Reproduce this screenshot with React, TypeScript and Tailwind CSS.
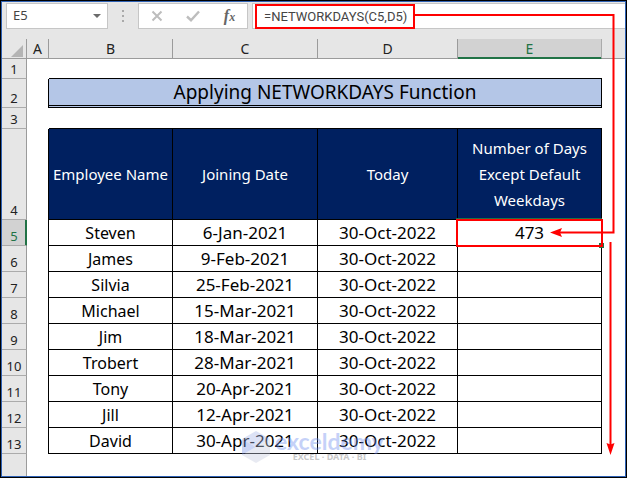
import React from "react";

const rows = [
  { name: "Steven", joined: "6-Jan-2021", today: "30-Oct-2022", days: "473" },
  { name: "James", joined: "9-Feb-2021", today: "30-Oct-2022", days: "" },
  { name: "Silvia", joined: "25-Feb-2021", today: "30-Oct-2022", days: "" },
  { name: "Michael", joined: "15-Mar-2021", today: "30-Oct-2022", days: "" },
  { name: "Jim", joined: "18-Mar-2021", today: "30-Oct-2022", days: "" },
  { name: "Trobert", joined: "28-Mar-2021", today: "30-Oct-2022", days: "" },
  { name: "Tony", joined: "20-Apr-2021", today: "30-Oct-2022", days: "" },
  { name: "Jill", joined: "12-Apr-2021", today: "30-Oct-2022", days: "" },
  { name: "David", joined: "30-Apr-2021", today: "30-Oct-2022", days: "" },
];

const FormulaBar = () => (
  <div className="flex h-[37px] gap-1 bg-[#e6e6e6] pt-px pl-1">
    <div className="flex h-[26px] w-[102px] items-center border border-[#c6c6c6] bg-white">
      <input
        aria-label="Name box"
        defaultValue="E5"
        className="min-w-0 flex-1 bg-transparent pl-1.5 text-[13px] text-[#444] outline-none"
      />
      <button aria-label="Show names" className="flex h-full w-5 items-center justify-center">
        <svg width="8" height="4" viewBox="0 0 8 4" fill="#6b6b6b">
          <path d="M0 0h8L4 4z" />
        </svg>
      </button>
    </div>
    <div className="flex h-[26px] w-[22px] flex-col items-center justify-center gap-[3px]">
      <span className="size-0.5 bg-[#a9a9a9]" />
      <span className="size-0.5 bg-[#a9a9a9]" />
      <span className="size-0.5 bg-[#a9a9a9]" />
    </div>
    <div className="flex h-[26px] w-[110px] items-center justify-around border border-[#c6c6c6] bg-white">
      <button aria-label="Cancel">
        <svg width="12" height="12" viewBox="0 0 12 12" fill="none" stroke="#bdbdbd" strokeWidth="2">
          <path d="M1.500 1.500l9 9M10.500 1.500l-9 9" />
        </svg>
      </button>
      <button aria-label="Enter">
        <svg width="14" height="12" viewBox="0 0 14 12" fill="none" stroke="#bdbdbd" strokeWidth="2.4">
          <path d="M1 6.500l4 3.700L13 1.500" />
        </svg>
      </button>
      <button
        aria-label="Insert function"
        className="font-['Liberation_Serif',serif] text-base leading-4 font-bold text-[#666] italic"
      >
        f<span className="text-xs">x</span>
      </button>
    </div>
    <div className="flex h-[26px] flex-1 items-center border border-r-0 border-[#c6c6c6] bg-white pl-0.5">
      <input
        aria-label="Formula"
        defaultValue="=NETWORKDAYS(C5,D5)"
        className="h-[25px] w-40 border-2 border-[#f00] bg-transparent pl-[7px] font-[Roboto,sans-serif] text-[13px] text-[#444] outline-none"
      />
    </div>
  </div>
);

const ColumnHead = ({ label }: { label: string }) => (
  <th
    scope="col"
    className={`border-r border-b p-0 text-sm leading-4 font-normal ${
      label === "E"
        ? "border-r-[#ababab] border-b-[#217346] bg-[#d2d2d2] text-[#217346] shadow-[inset_0_-1px_0_#217346]"
        : "border-[#9b9b9b] bg-[#e6e6e6] text-[#222]"
    }`}
  >
    {label}
  </th>
);

const RowHead = ({ n }: { n: number }) => (
  <th
    scope="row"
    className={`border-r border-b p-0 text-center align-bottom text-[13px] leading-[18px] font-normal ${
      n === 5
        ? "border-r-[#217346] border-b-[#ababab] bg-[#d2d2d2] text-[#217346] shadow-[inset_-1px_0_0_#217346]"
        : "border-r-[#9b9b9b] border-b-[#ababab] bg-[#e6e6e6] text-[#222]"
    }`}
  >
    {n}
  </th>
);

const headCell = "border-r border-b border-black bg-[#002060] p-0 text-[15px] leading-[26px] font-normal text-white";
const nameCell = "border-r border-b border-black p-0 text-center text-base leading-6 text-black";
const bodyCell = "border-r border-b border-black p-0 text-center text-[17px] leading-6 text-black";

const Sheet = () => (
  <table className="w-full table-fixed border-separate border-spacing-0">
    <colgroup>
      <col className="w-[25px]" />
      <col className="w-[22px]" />
      <col className="w-[124px]" />
      <col className="w-[145px]" />
      <col className="w-[140px]" />
      <col className="w-[144px]" />
      <col />
    </colgroup>
    <thead>
      <tr className="h-5">
        <td className="border-r border-b border-[#9b9b9b] bg-[#e6e6e6] p-0">
          <svg className="mt-1 mr-[3px] ml-auto block" width="12" height="12" viewBox="0 0 12 12" fill="#b4b4b4">
            <path d="M12 0v12H0z" />
          </svg>
        </td>
        {["A", "B", "C", "D", "E"].map((c) => (
          <ColumnHead key={c} label={c} />
        ))}
        <td className="border-b border-[#9b9b9b] bg-[#e6e6e6] p-0" />
      </tr>
    </thead>
    <tbody className="font-['Comic_Sans_MS','Noto_Sans',sans-serif]">
      <tr className="h-5">
        <RowHead n={1} />
        <td />
        <td colSpan={4} className="border-b border-black p-0" />
      </tr>
      <tr className="h-[29px]">
        <RowHead n={2} />
        <td className="border-r border-black p-0" />
        <td
          colSpan={4}
          className="border-r border-b-3 border-black bg-[#b4c6e7] p-0 text-center text-[19px] leading-6 text-black [border-bottom-style:double]"
        >
          Applying NETWORKDAYS Function
        </td>
      </tr>
      <tr className="h-[21px]">
        <RowHead n={3} />
        <td />
        <td colSpan={4} className="border-b border-black p-0" />
      </tr>
      <tr className="h-[91px]">
        <RowHead n={4} />
        <td className="border-r border-black p-0" />
        <th className={headCell}>Employee Name</th>
        <th className={headCell}>Joining Date</th>
        <th className={headCell}>Today</th>
        <th className={`${headCell} px-2`}>Number of Days Except Default Weekdays</th>
      </tr>
      {rows.map((r, i) => (
        <tr key={r.name} className="h-[26px]">
          <RowHead n={i + 5} />
          <td className="border-r border-black p-0" />
          <td className={nameCell}>{r.name}</td>
          <td className={bodyCell}>{r.joined}</td>
          <td className={bodyCell}>{r.today}</td>
          <td className={bodyCell}>{r.days}</td>
        </tr>
      ))}
    </tbody>
  </table>
);

const Arrows = () => (
  <svg className="pointer-events-none absolute top-0 left-0" width="626" height="476" viewBox="1 1 626 476" fill="none">
    <path d="M456 218.500h146" stroke="#217346" />
    <path d="M599 243h5v5h-5z" fill="#217346" />
    <path d="M457 220h145v26H457z" stroke="#f00" strokeWidth="2" />
    <path d="M413 15h200.500v217.500H560" stroke="#f00" strokeWidth="2" />
    <path d="M550 232.500l12-4.500-2 4.500 2 4.500z" fill="#f00" />
    <path d="M610.500 242v204" stroke="#f00" strokeWidth="2" />
    <path d="M610.500 455l-4-12 4 1.500 4-1.500z" fill="#f00" />
  </svg>
);

const Watermark = () => (
  <div className="pointer-events-none absolute top-[429px] left-[240px] flex items-center gap-1 opacity-40">
    <svg width="30" height="34" viewBox="0 0 30 34">
      <path d="M15 1l14 8-14 8-14-8z" fill="#a9b8ea" />
      <path d="M29 9v16l-14 8-14-8 14-8z" fill="#c6cde0" />
      <path d="M1 9l14 8L1 25z" fill="#7f98e8" />
    </svg>
    <div className="flex flex-col items-center">
      <span className="font-[Lato,sans-serif] text-[23px] leading-5 font-bold text-[#6f8ff0]">exceldemy</span>
      <span className="font-['Noto_Sans',sans-serif] text-[9px] leading-3 font-bold text-[#777]">EXCEL · DATA · BI</span>
    </div>
  </div>
);

const App = () => (
  <div className="relative flex min-h-screen flex-col border border-black bg-white font-['Noto_Sans',sans-serif]">
    <div className="flex flex-1 flex-col border border-[#2f62b5]">
      <FormulaBar />
      <Sheet />
      <div className="flex flex-1">
        <div className="w-[25px] border-r border-[#9b9b9b] bg-[#e6e6e6]" />
      </div>
    </div>
    <Watermark />
    <Arrows />
  </div>
);

export default App;
